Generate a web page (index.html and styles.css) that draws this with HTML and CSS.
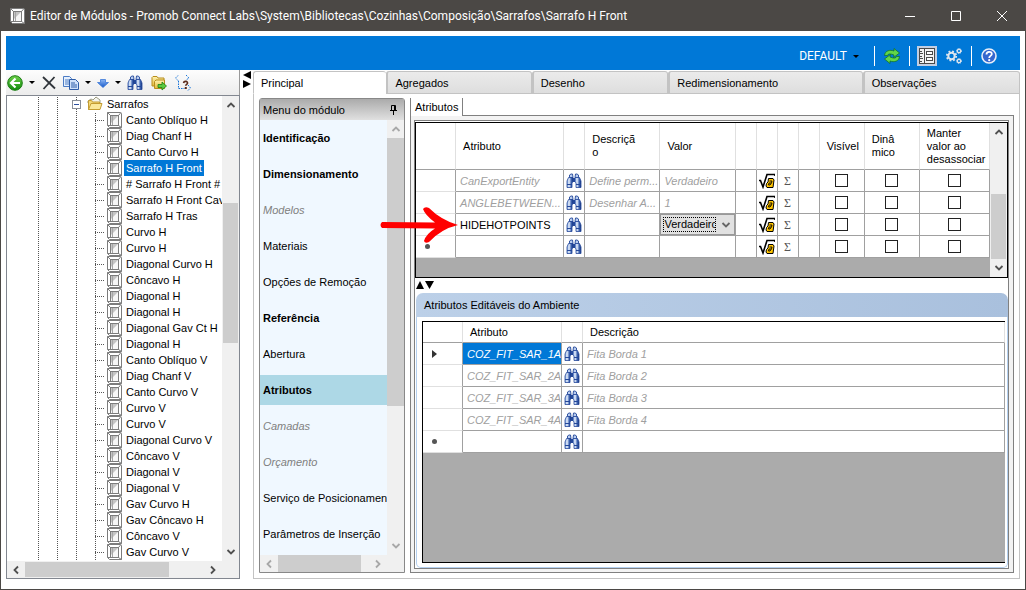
FILE: index.html
```html
<!DOCTYPE html>
<html lang="pt-BR">
<head>
    <meta charset="UTF-8">
    <meta name="viewport" content="width=device-width, initial-scale=1.0">
    <title>Editor de Módulos</title>
    <link rel="stylesheet" href="styles.css">
</head>
<body>

<!-- Ícones -->
<svg class="sprite" aria-hidden="true">
    <defs>
        <linearGradient id="gGreen" x1="0" y1="0" x2="0" y2="1"><stop offset="0" stop-color="#6fd04a"/><stop offset="1" stop-color="#0f8a0c"/></linearGradient>
        <linearGradient id="gBlue" x1="0" y1="0" x2="0" y2="1"><stop offset="0" stop-color="#8fb9f5"/><stop offset="1" stop-color="#1557c8"/></linearGradient>
        <linearGradient id="gLens" x1="0" y1="0" x2="1" y2="0"><stop offset="0" stop-color="#7fa3dc"/><stop offset=".35" stop-color="#eaf2fd"/><stop offset=".7" stop-color="#3f66b4"/><stop offset="1" stop-color="#16337a"/></linearGradient>
        <linearGradient id="gFolder" x1="0" y1="0" x2="0" y2="1"><stop offset="0" stop-color="#fff3b0"/><stop offset="1" stop-color="#e3b93c"/></linearGradient>
    </defs>
    <symbol id="cube" viewBox="0 0 16 16">
        <path d="M1.500 .5H14.500L15.500 1.500V15.500H3.500L1.500 13.500Z" fill="#fff" stroke="#7c7c7c"/>
        <path d="M1.500 .5 4.500 3.500M12.500 3.500 15 .5M4.500 13.500H1.500M12.500 13.500 15.500 15.500" stroke="#7c7c7c" fill="none"/>
        <rect x="4.500" y="3.500" width="8" height="10" fill="#f6f6f6" stroke="#7c7c7c"/>
        <path d="M5 4H12L5 11Z" fill="#c4c4c4"/>
        <path d="M6.500 4v9" stroke="#a5a5a5"/>
    </symbol>
    <symbol id="binoculars" viewBox="0 0 16 16">
        <path d="M3.500 4.500V2L5 1h1.500l.500 3.500zM9 4.500 9.500 1H11l1.500 1v2.500z" fill="#b9cdf0" stroke="#24489a" stroke-width=".9"/>
        <path d="M6.500 5h3v4h-3z" fill="#24489a"/>
        <path d="M2.500 4.500H7v4L6 10v4.500H1V8z" fill="url(#gLens)" stroke="#24489a" stroke-width=".8"/>
        <path d="M9 4.500h4.500L15 8v6.500h-5V10L9 8.500z" fill="url(#gLens)" stroke="#24489a" stroke-width=".8"/>
        <path d="M1 11.500h5M10 11.500h5" stroke="#24489a"/>
    </symbol>
    <symbol id="root" viewBox="0 0 16 16">
        <path d="M0 7.500h1.500L4 14 8 1.500h8V3" fill="none" stroke="#000" stroke-width="1.600"/>
        <path d="M9.500 5.500H14l1 1.500-1 7.500H8L7 13l.5-2.500L9 9z" fill="#ffc400" stroke="#000"/>
        <path d="M10.500 8H13l-.5 2-1.500 2H9.500l.5-2h2" fill="none" stroke="#000" stroke-width=".9"/>
    </symbol>
    <symbol id="refresh" viewBox="0 0 18 16">
        <path d="M1.500 7.500C2 2.500 7 1.500 11 3V.5L16.500 5 10.500 9.500 11 7C7.500 5.500 5 5.500 4.500 7.500Z" fill="#62d648" stroke="#0d6d1e" stroke-width=".7"/>
        <path d="M16.500 8.500C16 13.500 11 14.500 7 13V15.500L1.500 11 7.500 6.500 7 9C10.500 10.500 13 10.500 13.500 8.500Z" fill="#62d648" stroke="#0d6d1e" stroke-width=".7"/>
    </symbol>
    <symbol id="layout" viewBox="0 0 16 16">
        <rect x=".5" y=".5" width="15" height="15" fill="#f2f2f2" stroke="#4a4a4a"/>
        <path d="M5.500 1v14M1 3.500h2M1 5.500h3M1 8.500h2M1 10.500h3M1 13.500h2" stroke="#4a4a4a"/>
        <rect x="7.500" y="3.500" width="6" height="3" fill="#fff" stroke="#4a4a4a"/>
        <rect x="7.500" y="9.500" width="6" height="3" fill="#fff" stroke="#4a4a4a"/>
    </symbol>
    <symbol id="gears" viewBox="0 0 16 16">
        <g fill="none" stroke="#dfe6ee">
            <circle cx="5.500" cy="8" r="3.200" stroke-width="2"/>
            <circle cx="5.500" cy="8" r="4.700" stroke-width="1.800" stroke-dasharray="1.850 1.850"/>
            <circle cx="13" cy="3" r="1.700" stroke-width="1.300"/>
            <circle cx="13" cy="3" r="2.500" stroke-width="1" stroke-dasharray="1 1"/>
            <circle cx="13" cy="13" r="1.700" stroke-width="1.300"/>
            <circle cx="13" cy="13" r="2.500" stroke-width="1" stroke-dasharray="1 1"/>
        </g>
    </symbol>
    <symbol id="help" viewBox="0 0 16 16">
        <circle cx="8" cy="8" r="7" fill="#3567cf" stroke="#e9eef8" stroke-width="1.600"/>
        <path d="M5.500 6.500C5.500 3 10.800 3 10.800 6 10.800 8 8.200 7.800 8.200 10" fill="none" stroke="#fff" stroke-width="1.800"/>
        <circle cx="8.200" cy="12.200" r="1.100" fill="#fff"/>
    </symbol>
    <symbol id="back" viewBox="0 0 16 16">
        <circle cx="8" cy="8" r="7.300" fill="url(#gGreen)" stroke="#1b7d12"/>
        <path d="M8.500 3.500 4 8l4.500 4.500M4.500 8H13" fill="none" stroke="#fff" stroke-width="2.200"/>
    </symbol>
    <symbol id="delete" viewBox="0 0 16 16">
        <path d="M2 2 14 13.500" stroke="#2f343a" stroke-width="1.800"/>
        <path d="M13.500 2 2.500 14" stroke="#2f343a" stroke-width="1.800"/>
    </symbol>
    <symbol id="copy" viewBox="0 0 16 16">
        <path d="M.5 1.500h6l2 2v8h-8z" fill="#e6f0fd" stroke="#4c7cc4"/>
        <path d="M2 5h4M2 7h4M2 9h4" stroke="#4c7cc4"/>
        <path d="M6.500 4.500h6l3 3v7h-9z" fill="#cfe1fa" stroke="#2d5ca8"/>
        <path d="M8 8h4M8 10h6M8 12h6" stroke="#2d5ca8"/>
    </symbol>
    <symbol id="down" viewBox="0 0 12 16">
        <path d="M3.500 4.500h5v3h3L6 12.500.5 7.500h3z" fill="url(#gBlue)" stroke="#3c78d8" stroke-width=".8"/>
    </symbol>
    <symbol id="folderGo" viewBox="0 0 16 16">
        <path d="M1 11V2.500L2 1.500h4l1 1.500h6v8z" fill="url(#gFolder)" stroke="#b78d1c"/>
        <path d="M3.500 13.500v-7L5 5h8.500v8.500z" fill="url(#gFolder)" stroke="#b78d1c"/>
        <path d="M7 9.500h4V7l4.500 4-4.500 4v-2.500H7z" fill="#5cc93f" stroke="#1b7d12" stroke-width=".8"/>
    </symbol>
    <symbol id="treeHelp" viewBox="0 0 16 16">
        <path d="M3.500 0 .5 3l3 3M11 0l3 3-3 2M3.500 6v7.500h6M13 10l2.500 3-3 3" fill="none" stroke="#1673d8" stroke-dasharray="1.500 1"/>
        <path d="M8.500 8C9 5.500 13 6 12.500 8.300c-.3 1.200-1.800 1-1.800 2.500" fill="none" stroke="#5b2b1b" stroke-width="1.600"/>
        <path d="M9.800 12h2v2h-2z" fill="#5b2b1b"/>
    </symbol>
    <symbol id="folder" viewBox="0 0 16 16">
        <path d="M1 5 4 3l2 1 3-3 4 3v3H1z" fill="#f5f5ee" stroke="#9a9a80"/>
        <path d="M1.500 13.500v-9h3l1 1.500h7v7.500z" fill="#f3d978" stroke="#c49c32"/>
        <path d="M1.500 13.500 4 7.500h11l-2 6z" fill="#fbe89a" stroke="#c49c32"/>
    </symbol>
    <symbol id="chevron" viewBox="0 0 10 10">
        <path d="M1.500 3 5 6.500 8.500 3" fill="none" stroke="currentColor" stroke-width="1.800"/>
    </symbol>
    <symbol id="pin" viewBox="0 0 9 12">
        <path d="M2.500 6V1.500h4V6M5.500 1v5M1 6.500h7M4.500 7v4" fill="none" stroke="#000"/>
    </symbol>
</svg>

<div class="window">
    <header class="titlebar">
        <svg class="icon"><use href="#cube"/></svg>
        <h1 class="titlebar-text">Editor de Módulos - Promob Connect Labs\System\Bibliotecas\Cozinhas\Composição\Sarrafos\Sarrafo H Front</h1>
        <button class="win-btn" aria-label="Minimizar"><svg viewBox="0 0 12 12"><path d="M1 6.500h10"/></svg></button>
        <button class="win-btn" aria-label="Maximizar"><svg viewBox="0 0 12 12"><path d="M1.500 1.500h9v9h-9z"/></svg></button>
        <button class="win-btn" aria-label="Fechar"><svg viewBox="0 0 12 12"><path d="M1 1l10 10M11 1 1 11"/></svg></button>
    </header>

    <div class="ribbon">
        <button class="profile">DEFAULT <span class="caret"></span></button>
        <span class="sep"></span>
        <button class="ribbon-btn" aria-label="Atualizar"><svg class="icon wide"><use href="#refresh"/></svg></button>
        <span class="sep"></span>
        <button class="ribbon-btn pressed" aria-label="Painel"><svg class="icon"><use href="#layout"/></svg></button>
        <button class="ribbon-btn" aria-label="Configurações"><svg class="icon"><use href="#gears"/></svg></button>
        <span class="sep"></span>
        <button class="ribbon-btn" aria-label="Ajuda"><svg class="icon"><use href="#help"/></svg></button>
    </div>

    <div class="content">
        <!-- Árvore de módulos -->
        <aside class="sidebar">
            <div class="toolbar">
                <button class="tool" aria-label="Voltar"><svg class="icon"><use href="#back"/></svg></button>
                <button class="tool-caret" aria-label="Opções de voltar"><span class="caret"></span></button>
                <button class="tool" aria-label="Excluir"><svg class="icon"><use href="#delete"/></svg></button>
                <button class="tool" aria-label="Copiar"><svg class="icon"><use href="#copy"/></svg></button>
                <button class="tool-caret" aria-label="Opções de copiar"><span class="caret"></span></button>
                <button class="tool narrow" aria-label="Mover"><svg class="icon"><use href="#down"/></svg></button>
                <button class="tool-caret" aria-label="Opções de mover"><span class="caret"></span></button>
                <div class="tool-group">
                    <button class="tool" aria-label="Localizar"><svg class="icon"><use href="#binoculars"/></svg></button>
                    <button class="tool" aria-label="Abrir pasta"><svg class="icon"><use href="#folderGo"/></svg></button>
                    <button class="tool" aria-label="Estrutura"><svg class="icon"><use href="#treeHelp"/></svg></button>
                </div>
            </div>
            <div class="tree-box">
                <div class="tree-view">
                    <div class="tree-root"><button class="expander" aria-label="Recolher"></button><svg class="icon"><use href="#folder"/></svg>Sarrafos</div>
                    <ul class="tree">
                        <li><svg class="icon"><use href="#cube"/></svg><span>Canto Oblíquo H</span></li>
                        <li><svg class="icon"><use href="#cube"/></svg><span>Diag Chanf H</span></li>
                        <li><svg class="icon"><use href="#cube"/></svg><span>Canto Curvo H</span></li>
                        <li class="selected"><svg class="icon"><use href="#cube"/></svg><span>Sarrafo H Front</span></li>
                        <li><svg class="icon"><use href="#cube"/></svg><span># Sarrafo H Front #</span></li>
                        <li><svg class="icon"><use href="#cube"/></svg><span>Sarrafo H Front Cav</span></li>
                        <li><svg class="icon"><use href="#cube"/></svg><span>Sarrafo H Tras</span></li>
                        <li><svg class="icon"><use href="#cube"/></svg><span>Curvo H</span></li>
                        <li><svg class="icon"><use href="#cube"/></svg><span>Curvo H</span></li>
                        <li><svg class="icon"><use href="#cube"/></svg><span>Diagonal Curvo H</span></li>
                        <li><svg class="icon"><use href="#cube"/></svg><span>Côncavo H</span></li>
                        <li><svg class="icon"><use href="#cube"/></svg><span>Diagonal H</span></li>
                        <li><svg class="icon"><use href="#cube"/></svg><span>Diagonal H</span></li>
                        <li><svg class="icon"><use href="#cube"/></svg><span>Diagonal Gav Ct H</span></li>
                        <li><svg class="icon"><use href="#cube"/></svg><span>Diagonal H</span></li>
                        <li><svg class="icon"><use href="#cube"/></svg><span>Canto Oblíquo V</span></li>
                        <li><svg class="icon"><use href="#cube"/></svg><span>Diag Chanf V</span></li>
                        <li><svg class="icon"><use href="#cube"/></svg><span>Canto Curvo V</span></li>
                        <li><svg class="icon"><use href="#cube"/></svg><span>Curvo V</span></li>
                        <li><svg class="icon"><use href="#cube"/></svg><span>Curvo V</span></li>
                        <li><svg class="icon"><use href="#cube"/></svg><span>Diagonal Curvo V</span></li>
                        <li><svg class="icon"><use href="#cube"/></svg><span>Côncavo V</span></li>
                        <li><svg class="icon"><use href="#cube"/></svg><span>Diagonal V</span></li>
                        <li><svg class="icon"><use href="#cube"/></svg><span>Diagonal V</span></li>
                        <li><svg class="icon"><use href="#cube"/></svg><span>Gav Curvo H</span></li>
                        <li><svg class="icon"><use href="#cube"/></svg><span>Gav Côncavo H</span></li>
                        <li><svg class="icon"><use href="#cube"/></svg><span>Côncavo V</span></li>
                        <li><svg class="icon"><use href="#cube"/></svg><span>Gav Curvo V</span></li>
                    </ul>
                </div>
                <div class="scroll vertical tree-v"><svg class="up"><use href="#chevron"/></svg><i class="thumb"></i><svg><use href="#chevron"/></svg></div>
                <div class="scroll horizontal tree-h"><svg class="left"><use href="#chevron"/></svg><i class="thumb"></i><svg class="right"><use href="#chevron"/></svg></div>
            </div>
        </aside>

        <div class="splitter">
            <svg viewBox="0 0 8 20"><path d="M8 1v8L0 5zM0 10v8l8-4z"/></svg>
        </div>

        <main class="editor">
            <nav class="tabs">
                <button class="tab tab-principal active">Principal</button>
                <button class="tab tab-agregados">Agregados</button>
                <button class="tab tab-desenho">Desenho</button>
                <button class="tab tab-redim">Redimensionamento</button>
                <button class="tab tab-obs">Observações</button>
            </nav>

            <div class="editor-body">
                <!-- Menu do módulo -->
                <section class="menu">
                    <header class="menu-header">Menu do módulo <svg class="pin"><use href="#pin"/></svg></header>
                    <div class="menu-box">
                        <div class="menu-list">
                            <a href="#" class="bold">Identificação</a>
                            <a href="#" class="bold">Dimensionamento</a>
                            <a href="#" class="off">Modelos</a>
                            <a href="#">Materiais</a>
                            <a href="#">Opções de Remoção</a>
                            <a href="#" class="bold">Referência</a>
                            <a href="#">Abertura</a>
                            <a href="#" class="bold current">Atributos</a>
                            <a href="#" class="off">Camadas</a>
                            <a href="#" class="off">Orçamento</a>
                            <a href="#">Serviço de Posicionamen</a>
                            <a href="#">Parâmetros de Inserção</a>
                        </div>
                        <div class="scroll vertical menu-v"><svg class="up"><use href="#chevron"/></svg><i class="thumb"></i><svg><use href="#chevron"/></svg></div>
                        <div class="scroll horizontal menu-h"><svg class="left"><use href="#chevron"/></svg><i class="thumb"></i><svg class="right"><use href="#chevron"/></svg></div>
                    </div>
                </section>

                <section class="details">
                    <div class="subtabs"><button class="subtab">Atributos</button></div>
                    <div class="details-body">
                        <div class="frame">
                            <!-- Atributos do módulo -->
                            <div class="grid-attrs">
                                <div class="grid-area">
                                    <table class="grid">
                                        <colgroup>
                                            <col class="c-head"><col class="c-name"><col class="c-icon"><col class="c-text"><col class="c-text"><col class="c-icon">
                                            <col class="c-icon"><col class="c-icon"><col class="c-icon"><col class="c-vis"><col class="c-din"><col class="c-keep">
                                        </colgroup>
                                        <thead>
                                            <tr>
                                                <th></th><th>Atributo</th><th></th><th>Descriçã<br>o</th><th>Valor</th><th></th>
                                                <th></th><th></th><th></th><th>Visível</th><th>Dinâ<br>mico</th><th>Manter<br>valor ao<br>desassociar</th>
                                            </tr>
                                        </thead>
                                        <tbody>
                                            <tr>
                                                <td class="rowhead"></td><td class="off">CanExportEntity</td>
                                                <td class="pick"><button aria-label="Localizar"><svg class="icon"><use href="#binoculars"/></svg></button></td>
                                                <td class="off">Define perm...</td><td class="off">Verdadeiro</td><td></td>
                                                <td class="pick"><button aria-label="Fórmula"><svg class="icon"><use href="#root"/></svg></button></td>
                                                <td class="pick"><button class="sigma">Σ</button></td><td></td>
                                                <td class="check"><input type="checkbox" aria-label="Visível"></td><td class="check"><input type="checkbox" aria-label="Dinâmico"></td><td class="check"><input type="checkbox" aria-label="Manter valor ao desassociar"></td>
                                            </tr>
                                            <tr>
                                                <td class="rowhead"></td><td class="off">ANGLEBETWEEN...</td>
                                                <td class="pick"><button aria-label="Localizar"><svg class="icon"><use href="#binoculars"/></svg></button></td>
                                                <td class="off">Desenhar A...</td><td class="off">1</td><td></td>
                                                <td class="pick"><button aria-label="Fórmula"><svg class="icon"><use href="#root"/></svg></button></td>
                                                <td class="pick"><button class="sigma">Σ</button></td><td></td>
                                                <td class="check"><input type="checkbox" aria-label="Visível"></td><td class="check"><input type="checkbox" aria-label="Dinâmico"></td><td class="check"><input type="checkbox" aria-label="Manter valor ao desassociar"></td>
                                            </tr>
                                            <tr>
                                                <td class="rowhead marked">
                                                    <svg class="arrow" viewBox="0 0 80 42"><path d="M44 5Q46 2 50 4 62 16 79 21 62 25 50 38 46 40 45 37 47 30 56 24.500L3 24Q0 21 3 18L56 18.500Q46 11 44 5Z"/></svg>
                                                </td>
                                                <td class="edit">HIDEHOTPOINTS</td>
                                                <td class="pick"><button aria-label="Localizar"><svg class="icon"><use href="#binoculars"/></svg></button></td>
                                                <td></td>
                                                <td class="combo-cell"><div class="combo"><select aria-label="Valor"><option>Verdadeiro</option></select><svg><use href="#chevron"/></svg></div></td><td></td>
                                                <td class="pick"><button aria-label="Fórmula"><svg class="icon"><use href="#root"/></svg></button></td>
                                                <td class="pick"><button class="sigma">Σ</button></td><td></td>
                                                <td class="check"><input type="checkbox" aria-label="Visível"></td><td class="check"><input type="checkbox" aria-label="Dinâmico"></td><td class="check"><input type="checkbox" aria-label="Manter valor ao desassociar"></td>
                                            </tr>
                                            <tr>
                                                <td class="rowhead"><i class="new-row"></i></td><td></td>
                                                <td class="pick"><button aria-label="Localizar"><svg class="icon"><use href="#binoculars"/></svg></button></td>
                                                <td></td><td></td><td></td>
                                                <td class="pick"><button aria-label="Fórmula"><svg class="icon"><use href="#root"/></svg></button></td>
                                                <td class="pick"><button class="sigma">Σ</button></td><td></td>
                                                <td class="check"><input type="checkbox" aria-label="Visível"></td><td class="check"><input type="checkbox" aria-label="Dinâmico"></td><td class="check"><input type="checkbox" aria-label="Manter valor ao desassociar"></td>
                                            </tr>
                                        </tbody>
                                    </table>
                                </div>
                                <div class="scroll vertical grid-v"><svg class="up"><use href="#chevron"/></svg><i class="thumb"></i><svg><use href="#chevron"/></svg></div>
                            </div>

                            <div class="hsplit"><svg viewBox="0 0 18 8"><path d="M0 8h8L4 0zM9 0h9l-4.500 8z"/></svg></div>

                            <!-- Atributos editáveis -->
                            <div class="panel">
                                <h2 class="panel-title">Atributos Editáveis do Ambiente</h2>
                                <div class="panel-body">
                                    <div class="grid-env">
                                        <table class="grid">
                                            <colgroup><col class="c-head"><col class="c-env"><col class="c-icon"><col></colgroup>
                                            <thead>
                                                <tr><th></th><th>Atributo</th><th></th><th>Descrição</th></tr>
                                            </thead>
                                            <tbody>
                                                <tr><td class="rowhead"><i class="current-row"></i></td><td class="off selected">COZ_FIT_SAR_1A</td><td class="pick"><button aria-label="Localizar"><svg class="icon"><use href="#binoculars"/></svg></button></td><td class="off">Fita Borda 1</td></tr>
                                                <tr><td class="rowhead"></td><td class="off">COZ_FIT_SAR_2A</td><td class="pick"><button aria-label="Localizar"><svg class="icon"><use href="#binoculars"/></svg></button></td><td class="off">Fita Borda 2</td></tr>
                                                <tr><td class="rowhead"></td><td class="off">COZ_FIT_SAR_3A</td><td class="pick"><button aria-label="Localizar"><svg class="icon"><use href="#binoculars"/></svg></button></td><td class="off">Fita Borda 3</td></tr>
                                                <tr><td class="rowhead"></td><td class="off">COZ_FIT_SAR_4A</td><td class="pick"><button aria-label="Localizar"><svg class="icon"><use href="#binoculars"/></svg></button></td><td class="off">Fita Borda 4</td></tr>
                                                <tr><td class="rowhead"><i class="new-row"></i></td><td></td><td class="pick"><button aria-label="Localizar"><svg class="icon"><use href="#binoculars"/></svg></button></td><td></td></tr>
                                            </tbody>
                                        </table>
                                    </div>
                                </div>
                            </div>
                        </div>
                    </div>
                </section>
            </div>
        </main>
    </div>
</div>

</body>
</html>
```
FILE: styles.css
```css
* {
    box-sizing: border-box;
}

body {
    margin: 0;
    font-family: "Liberation Sans", Arial, sans-serif;
    font-size: 11px;
    line-height: 16px;
    color: #000;
}

button {
    margin: 0;
    padding: 0;
    border: none;
    background: none;
    font: inherit;
    color: inherit;
}

svg {
    display: block;
    flex: none;
}

.sprite {
    position: absolute;
    width: 0;
    height: 0;
}

.icon {
    width: 16px;
    height: 16px;
}

.icon.wide {
    width: 18px;
}

.caret {
    display: inline-block;
    border: 3px solid transparent;
    border-top-color: #000;
    border-bottom: none;
}

/* Janela */
.window {
    display: flex;
    flex-direction: column;
    height: 100vh;
    border: 1px solid #4b4845;
    border-top: none;
    background: #fff;
}

.titlebar {
    display: flex;
    align-items: center;
    height: 31px;
    padding-left: 8px;
    background: #4b4845;
    color: #fff;
}

.titlebar-text {
    flex: 1;
    margin: 0 0 0 5px;
    font-family: Roboto, "Open Sans", sans-serif;
    font-size: 12px;
    font-weight: normal;
    white-space: nowrap;
}

.win-btn {
    display: flex;
    align-items: center;
    justify-content: center;
    width: 46px;
    height: 31px;
}

.win-btn svg {
    width: 12px;
    height: 12px;
    fill: none;
    stroke: #fff;
}

.ribbon {
    display: flex;
    align-items: center;
    justify-content: flex-end;
    gap: 7px;
    height: 34px;
    margin: 5px 5px 0;
    padding: 6px 21px 0 0;
    background: #0078d7;
    color: #fff;
}

.profile {
    display: flex;
    align-items: center;
    gap: 6px;
    margin-right: 8px;
    font-family: Roboto, "Open Sans", sans-serif;
    font-size: 12px;
}

.sep {
    width: 1px;
    height: 20px;
    background: #fff;
}

.ribbon-btn {
    display: flex;
    align-items: center;
    justify-content: center;
    width: 20px;
    height: 20px;
}

.ribbon-btn.pressed {
    background: #c3cfe2;
}

.content {
    display: flex;
    flex: 1;
    min-height: 0;
    padding: 0 5px 10px;
}

/* Barra lateral */
.sidebar {
    display: flex;
    flex-direction: column;
    width: 234px;
}

.toolbar {
    display: flex;
    align-items: center;
    gap: 4px;
    height: 25px;
    border-right: 1px solid #999;
    background: linear-gradient(#fdfdfd, #ececec);
}

.tool {
    display: flex;
    justify-content: center;
    width: 18px;
}

.tool.narrow {
    width: 14px;
}

.tool-caret {
    display: flex;
    justify-content: center;
    width: 8px;
}

.tool-group {
    display: flex;
    gap: 6px;
}

.tree-box {
    display: grid;
    grid-template-columns: 1fr 17px;
    grid-template-rows: 1fr 17px;
    flex: 1;
    min-height: 0;
    border: 1px solid #828790;
    background: #f0f0f0;
}

.tree-view {
    overflow: hidden;
    background:
        repeating-linear-gradient(#fff 0 1px, transparent 1px 2px),
        linear-gradient(90deg, transparent 31px, #555 31px 32px, transparent 32px 50px, #555 50px 51px, transparent 51px 69px, #555 69px 70px, transparent 70px),
        #fff;
}

.tree-root {
    display: flex;
    height: 16px;
    padding-left: 65px;
}

.tree-root .icon {
    margin: 0 4px 0 6px;
}

.expander {
    width: 9px;
    height: 9px;
    margin-top: 4px;
    border: 1px solid #8a8f98;
    background: linear-gradient(#2c50a0, #2c50a0) center / 5px 1px no-repeat, #fff;
}

.tree {
    margin: 0;
    padding: 0 0 0 88px;
    list-style: none;
    background:
        repeating-linear-gradient(#fff 0 1px, transparent 1px 2px) 88px 0 / 1px auto repeat-y,
        linear-gradient(#555, #555) 88px 0 / 1px 100% no-repeat;
}

.tree li {
    display: flex;
    gap: 2px;
    height: 16px;
    padding-left: 11px;
    white-space: nowrap;
    background: repeating-linear-gradient(90deg, #555 0 1px, transparent 1px 2px) 0 8px / 10px 1px no-repeat;
}

.tree li span {
    padding: 0 2px;
}

.tree li.selected span {
    background: #0078d7;
    color: #fff;
}

/* Barras de rolagem */
.scroll {
    display: flex;
    align-items: center;
    background: #f0f0f0;
    color: #505050;
}

.scroll svg {
    width: 10px;
    height: 10px;
    margin: 4px;
}

.scroll.vertical {
    flex-direction: column;
    justify-content: space-between;
    width: 17px;
}

.scroll.horizontal {
    justify-content: space-between;
    height: 17px;
}

.scroll .up {
    transform: rotate(180deg);
}

.scroll .left {
    transform: rotate(90deg);
}

.scroll .right {
    transform: rotate(-90deg);
}

.scroll .thumb {
    background: #cdcdcd;
}

.vertical .thumb {
    width: 15px;
}

.horizontal .thumb {
    height: 15px;
}

.tree-v .thumb {
    height: 30%;
    margin: 89px 0 auto;
}

.tree-h .thumb {
    width: 67%;
    margin-right: auto;
}

.splitter {
    width: 13px;
    padding-left: 3px;
}

.splitter svg {
    width: 8px;
    height: 20px;
}

/* Editor */
.editor {
    display: flex;
    flex-direction: column;
    flex: 1;
    min-width: 0;
    padding-top: 1px;
}

.tabs {
    display: flex;
}

.tab {
    min-width: 0;
    height: 23px;
    padding: 0 7px;
    border: 1px solid #c3c3c3;
    border-left-width: 2px;
    border-radius: 3px 3px 0 0;
    background: linear-gradient(#ebebeb, #dedede);
    text-align: left;
}

.tab.active {
    border-left-width: 1px;
    border-right: none;
    border-bottom-color: #fff;
    background: #fff;
}

.tab-principal {
    flex: 1 1 133px;
}

.tab-agregados {
    flex: 1 1 145px;
}

.tab-desenho {
    flex: 1 1 136px;
}

.tab-redim {
    flex: 1 1 194px;
}

.tab-obs {
    flex: 1 1 157px;
}

.editor-body {
    display: flex;
    flex: 1;
    gap: 5px;
    min-height: 0;
    padding: 4px 5px 5px;
    border: 1px solid #c3c3c3;
    border-top: none;
}

/* Menu do módulo */
.menu {
    display: flex;
    flex-direction: column;
    width: 146px;
    border: 1px solid #888;
    border-radius: 3px 3px 0 0;
}

.menu-header {
    display: flex;
    align-items: center;
    justify-content: space-between;
    height: 21px;
    padding: 0 6px 0 3px;
    background: linear-gradient(#ababab, #e0e0e0);
}

.pin {
    width: 9px;
    height: 12px;
}

.menu-box {
    display: grid;
    grid-template-columns: 1fr 17px;
    grid-template-rows: 1fr 17px;
    flex: 1;
    min-height: 0;
    background: #f0f0f0;
}

.menu-list {
    display: flex;
    flex-direction: column;
    gap: 6px;
    padding-top: 3px;
    overflow: hidden;
    background: #f0f8ff;
}

.menu-list a {
    flex: none;
    padding-left: 3px;
    color: #000;
    line-height: 30px;
    text-decoration: none;
    white-space: nowrap;
}

.menu-list .bold {
    font-weight: bold;
}

.menu-list .off {
    color: #808080;
    font-style: italic;
}

.menu-list .current {
    background: #add8e6;
}

.menu-box .scroll {
    color: #a8a8a8;
}

.menu-v .thumb {
    flex: 1;
    width: 17px;
    margin-bottom: 131px;
}

.menu-h .thumb {
    width: 65%;
    height: 17px;
    margin-right: auto;
}

/* Detalhes */
.details {
    display: flex;
    flex-direction: column;
    flex: 1;
    min-width: 0;
}

.subtabs {
    display: flex;
    height: 18px;
    border-left: 1px solid #808080;
}

.subtabs::after {
    content: "";
    flex: 1;
    border-bottom: 1px solid #808080;
}

.subtab {
    padding: 0 4px;
    border-right: 1px solid #808080;
}

.details-body {
    display: flex;
    flex: 1;
    min-height: 0;
    padding: 4px 4px 3px 3px;
    border: 1px solid #808080;
    border-top: none;
    background: #f3f3f3;
}

.frame {
    display: flex;
    flex-direction: column;
    flex: 1;
    min-width: 0;
    padding-top: 1px;
    border: 1px solid #808080;
    background: #fff;
}

.grid-attrs {
    display: flex;
    border: 1px solid #000;
}

.grid-area {
    flex: 1;
    min-width: 0;
    padding-bottom: 19px;
    background: #ababab;
}

.grid {
    width: 100%;
    border-spacing: 0;
    table-layout: fixed;
}

.c-head { width: 40px; }
.c-name { width: 108px; }
.c-icon { width: 21px; }
.c-text { width: 75px; }
.c-vis { width: 45px; }
.c-din { width: 55px; }
.c-keep { width: 70px; }
.c-env { width: 99px; }

.grid th {
    height: 47px;
    padding: 0 0 0 7px;
    border-right: 1px solid #e0e0e0;
    border-bottom: 1px solid #a0a0a0;
    background: #fff;
    font-weight: normal;
    line-height: 13px;
    text-align: left;
}

.grid td {
    height: 22px;
    padding: 0 0 0 4px;
    border-right: 1px solid #a0a0a0;
    border-bottom: 1px solid #a0a0a0;
    background: #fff;
    line-height: 16px;
    white-space: nowrap;
}

.grid .off {
    color: #a0a0a0;
    font-style: italic;
}

.grid .selected {
    background: #0078d7;
    color: #fff;
}

.grid .rowhead {
    padding-left: 9px;
    border-bottom-color: #e0e0e0;
}

.grid .pick,
.grid .check {
    padding: 0;
    text-align: center;
}

.pick button {
    display: flex;
    justify-content: center;
    width: 100%;
    line-height: 16px;
}

.grid .sigma {
    font-family: "Liberation Serif", serif;
    font-size: 12px;
    color: #555;
}

.check input {
    display: block;
    appearance: none;
    width: 13px;
    height: 13px;
    margin: 0 auto;
    border: 1px solid #222;
    background: #fff;
}

.new-row {
    display: block;
    width: 5px;
    height: 5px;
    border-radius: 50%;
    background: #555;
}

.current-row {
    display: block;
    width: 0;
    border: 4px solid transparent;
    border-left: 5px solid #333;
    border-right: none;
}

.grid .combo-cell {
    padding: 0;
}

.combo {
    display: flex;
    align-items: center;
    height: 21px;
    padding: 0 3px 0 2px;
    border: 1px solid #999;
    background: #e1e1e1;
}

.combo select {
    appearance: none;
    flex: 1;
    min-width: 0;
    height: 15px;
    margin-right: 5px;
    padding: 0;
    border: 1px dotted #000;
    border-radius: 0;
    background: none;
    font: inherit;
    line-height: 13px;
}

.combo svg {
    width: 10px;
    height: 10px;
    color: #666;
}

/* Seta de destaque sobre a linha */
.marked {
    position: relative;
}

.arrow {
    position: absolute;
    top: -10px;
    left: -37px;
    width: 80px;
    height: 42px;
    fill: #f00;
}

.grid-v svg {
    margin: 4px 3px;
}

.grid-v .thumb {
    height: 65px;
    margin-top: auto;
}

.hsplit {
    height: 15px;
    padding: 3px 0 0 1px;
}

.hsplit svg {
    width: 18px;
    height: 8px;
}

.panel {
    display: flex;
    flex-direction: column;
    flex: 1;
    min-height: 0;
    margin-left: 1px;
}

.panel-title {
    margin: 0;
    padding: 0 8px;
    border-radius: 7px 7px 0 0;
    background: linear-gradient(90deg, #bcd0e8, #a9c0dd);
    font-size: 11px;
    font-weight: normal;
    line-height: 24px;
}

.panel-body {
    display: flex;
    flex: 1;
    min-height: 0;
    padding: 4px 2px 4px 5px;
    border: 1px solid #b4d0f0;
    border-top: none;
    border-radius: 0 0 5px 5px;
}

.grid-env {
    flex: 1;
    border: 1px solid #000;
    border-right: none;
    background: #ababab;
}

.grid-env th {
    height: 21px;
}
```
